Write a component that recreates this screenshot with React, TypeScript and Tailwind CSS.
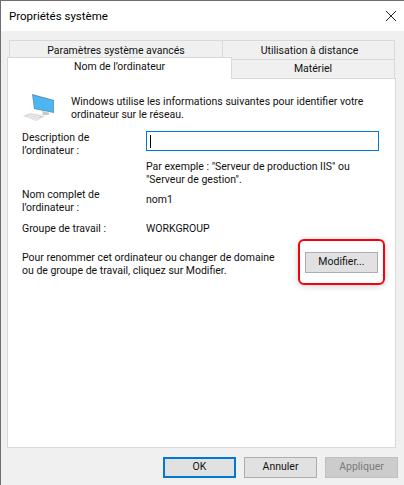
const font = { fontFamily: 'Roboto, sans-serif' };

function ComputerIcon() {
  return (
    <svg width="32" height="30" viewBox="0 0 32 30" className="shrink-0">
      <path d="M10 1 L32 7 L32 20 L12 16 Z" fill="#5d93b5" />
      <path d="M11 2.5 L31.3 8 L31.3 19 L12.6 15.3 Z" fill="#4db5f2" />
      <path d="M20 18 L27 19.5 L27 22 L21 22 Z" fill="#c4c9cd" />
      <path d="M8 20 L23 23 L14 28 L1 23 Z" fill="#d5d8da" />
      <path d="M7 21.5 L18 23.7 M5 23 L17 25.5 M3.5 24 L15 26.8" stroke="#f4f5f5" strokeWidth="0.8" />
    </svg>
  );
}

function DialogButton({ label, className }: { label: string; className: string }) {
  return (
    <button className={`w-[73px] h-[21px] flex items-center justify-center text-[10.5px] leading-none ${className}`}>
      {label}
    </button>
  );
}

export default function App() {
  return (
    <div style={font} className="w-[404px] h-[485px] bg-[#f0f0f0] flex flex-col text-[10.5px] leading-[13px] text-[#111111] overflow-hidden border-t border-l border-[#6e6e6e] whitespace-nowrap">
      {/* Title bar */}
      <div className="h-[30px] bg-white flex items-center justify-between pl-[8px] pr-[6px] shrink-0">
        <span className="text-[11.5px] text-black">Propriétés système</span>
        <svg width="12" height="12" viewBox="0 0 12 12" className="mr-[1px]">
          <path d="M1 1 L11 11 M11 1 L1 11" stroke="#222" strokeWidth="1" />
        </svg>
      </div>

      {/* Tabs, back row */}
      <div className="flex pl-[8px] pt-[9px] shrink-0">
        <div className="w-[214px] h-[19px] bg-[#f0f0f0] border border-b-0 border-[#d9d9d9] text-center pt-[3px]">
          Paramètres système avancés
        </div>
        <div className="w-[172px] h-[19px] bg-[#f0f0f0] border border-l-0 border-b-0 border-[#d9d9d9] text-center pt-[3px] pl-[2px]">
          Utilisation à distance
        </div>
      </div>

      {/* Tabs, front row */}
      <div className="flex items-start pl-[6px] -mt-[2px] relative z-10 shrink-0">
        <div className="w-[225px] h-[22px] bg-white border border-b-0 border-[#d9d9d9] text-center pt-[2px]">
          Nom de l’ordinateur
        </div>
        <div className="w-[163px] h-[20px] mt-[2px] bg-[#f0f0f0] border border-l-0 border-[#d9d9d9] text-center pt-[2px]">
          Matériel
        </div>
      </div>

      {/* Panel */}
      <div className="w-[389px] h-[370px] ml-[6px] -mt-[1px] bg-white border border-t-0 border-[#d9d9d9] pt-[15px] pl-[14px] pr-[16px] shrink-0">
        <div className="flex items-start gap-[17px]">
          <ComputerIcon />
          <p className="pt-[2px]">
            Windows utilise les informations suivantes pour identifier votre
            <br />
            ordinateur sur le réseau.
          </p>
        </div>

        <div className="grid grid-cols-[124px_233px] mt-[6px]">
          <div className="pt-[2px]">
            Description de
            <br />
            l’ordinateur :
          </div>
          <div className="h-[20px] border border-[#0078d7] flex items-center pl-[3px] mt-[2px]">
            <span className="w-px h-[13px] bg-black" />
          </div>

          <div />
          <p className="mt-[3px] col-start-2">
            Par exemple : "Serveur de production IIS" ou
            <br />
            "Serveur de gestion".
          </p>

          <div className="mt-[2px]">
            Nom complet de
            <br />
            l’ordinateur :
          </div>
          <div className="mt-[7px]">nom1</div>

          <div className="mt-[8px]">Groupe de travail :</div>
          <div className="mt-[8px]">WORKGROUP</div>
        </div>

        <div className="flex items-center justify-between mt-[4px]">
          <p className="pt-[3px]">
            Pour renommer cet ordinateur ou changer de domaine
            <br />
            ou de groupe de travail, cliquez sur Modifier.
          </p>
          <div className="w-[87px] h-[46px] border-2 border-[#f5000f] rounded-[6px] flex items-center justify-center shadow-[0_1px_6px_rgba(0,0,0,0.2)] -mr-[6px] shrink-0">
            <DialogButton label="Modifier..." className="bg-[#e1e1e1] border border-[#adadad]" />
          </div>
        </div>
      </div>

      {/* Footer buttons */}
      <div className="flex justify-end gap-[8px] pr-[6px] pt-[9px]">
        <DialogButton label="OK" className="bg-[#e1e1e1] border-2 border-[#0078d7]" />
        <DialogButton label="Annuler" className="bg-[#e1e1e1] border border-[#adadad]" />
        <DialogButton label="Appliquer" className="bg-[#cccccc] border border-[#bfbfbf] text-[#7a7a7a]" />
      </div>
    </div>
  );
}
